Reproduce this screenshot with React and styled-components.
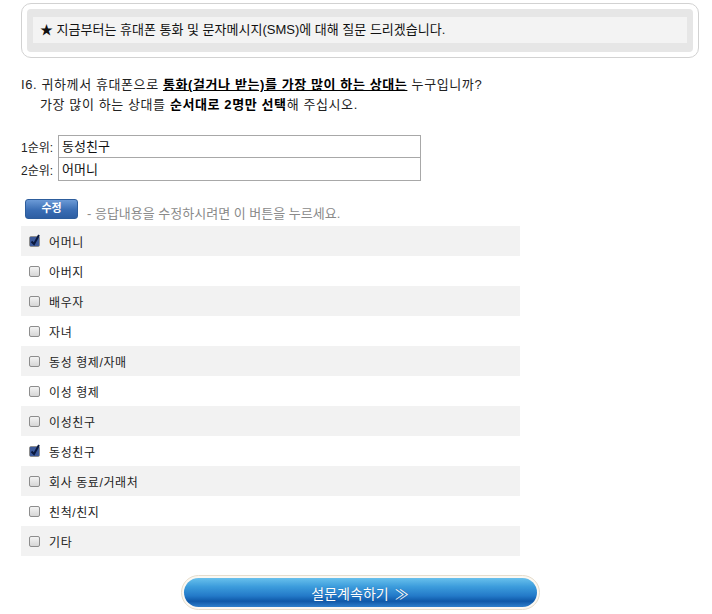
import React from 'react'
import styled, { createGlobalStyle } from 'styled-components'

const GlobalStyle = createGlobalStyle`
    body {
        margin: 0;
        background: #fff;
        font-family: "Liberation Sans", "Noto Sans CJK KR", sans-serif;
        font-size: 12px;
        color: #222;
    }
`

const Page = styled.div`
    width: 678px;
    padding: 3px 0 0 21px;
`

const NoticeBox = styled.div`
    border: 1px solid #d2d2d2;
    border-radius: 10px;
    padding: 5px 5px;
`

const NoticeInner = styled.div`
    background: #e6e6e6;
    border-radius: 4px;
    padding: 8px 6px 9px 6px;
`

const NoticeText = styled.div`
    background: #f3f3f3;
    height: 26px;
    line-height: 26px;
    padding-left: 7px;
    font-size: 13px;
    color: #111;
`

const Question = styled.div`
    margin-top: 17px;
    line-height: 20px;
    font-size: 13px;
    letter-spacing: 0.6px;
    color: #222;
`

const QuestionSub = styled.div`
    padding-left: 19px;
`

const Strong = styled.b`
    text-decoration: ${p => (p.underline ? 'underline' : 'none')};
    color: #000;
`

const Ranks = styled.div`
    margin-top: 20px;
    display: flex;
    flex-direction: column;
`

const RankRow = styled.div`
    display: flex;
    align-items: center;
`

const RankLabel = styled.span`
    width: 37px;
    font-size: 12px;
    color: #222;
`

const RankInput = styled.div`
    width: 358px;
    height: 21px;
    line-height: 21px;
    border: 1px solid #a8a8a8;
    border-top-width: ${p => (p.joined ? '0' : '1px')};
    padding-top: ${p => (p.joined ? '1px' : '0')};
    padding-left: 3px;
    font-size: 13px;
    color: #111;
`

const EditRow = styled.div`
    margin-top: 18px;
    padding-left: 4px;
    display: flex;
    align-items: flex-end;
    gap: 9px;
    height: 20px;
`

const EditButton = styled.button`
    width: 53px;
    height: 20px;
    border: 1px solid #2d5d9c;
    border-radius: 3px;
    background: linear-gradient(#6b9ad6, #3a6db4 55%, #2d5ea3);
    color: #fff;
    font-family: inherit;
    font-size: 11px;
    font-weight: bold;
    padding: 0 0 3px;
    line-height: 14px;
`

const EditHint = styled.span`
    color: #8a8a8a;
    font-size: 13px;
    line-height: 14px;
    position: relative;
    top: 2px;
`

const List = styled.div`
    margin-top: 7px;
    width: 499px;
`

const Option = styled.div`
    height: 30px;
    display: flex;
    align-items: center;
    padding-left: 8px;
    gap: 9px;
    background: ${p => (p.shaded ? '#f2f2f2' : '#fff')};
    font-size: 12px;
    letter-spacing: 0.6px;
    color: #222;
`

const Box = styled.span`
    width: 9px;
    height: 9px;
    border: 1px solid #8d8d8d;
    border-radius: 2px;
    background: linear-gradient(#f4f4f4, #d6d6d6);
    position: relative;
    flex: none;
`

const Tick = styled.svg`
    position: absolute;
    left: -1px;
    top: -3px;
`

const Footer = styled.div`
    margin-top: 19px;
    display: flex;
    justify-content: center;
`

const NextButton = styled.button`
    width: 359px;
    height: 35px;
    border-radius: 18px;
    border: 1px solid #e6ddcc;
    padding: 2px;
    background: #fbf8f2;
    font-family: inherit;
    cursor: pointer;
`

const NextInner = styled.div`
    height: 100%;
    border-radius: 16px;
    background: linear-gradient(
        #68c0ec 0%,
        #3c9cdc 30%,
        #2379c8 62%,
        #0f58a8 80%,
        #2f7fcc 100%
    );
    color: #fff;
    font-size: 14px;
    display: flex;
    align-items: center;
    justify-content: center;
    gap: 6px;
    text-shadow: 0 0 1px rgba(0, 40, 90, 0.4);
`

const options = [
    { label: '어머니', checked: true },
    { label: '아버지' },
    { label: '배우자' },
    { label: '자녀' },
    { label: '동성 형제/자매' },
    { label: '이성 형제' },
    { label: '이성친구' },
    { label: '동성친구', checked: true },
    { label: '회사 동료/거래처' },
    { label: '친척/친지' },
    { label: '기타' },
]

const Checkbox = ({ checked }) => (
    <Box>
        {checked && (
            <Tick width="12" height="13" viewBox="0 0 12 13">
                <rect x="1" y="3" width="9" height="9" fill="#3d5a9a" />
                <path d="M2.5 7.5 L5 10 L10 1" stroke="#0b1a40" strokeWidth="2" fill="none" />
            </Tick>
        )}
    </Box>
)

const App = () => {
    return (
        <Page>
            <GlobalStyle />
            <NoticeBox>
                <NoticeInner>
                    <NoticeText>★ 지금부터는 휴대폰 통화 및 문자메시지(SMS)에 대해 질문 드리겠습니다.</NoticeText>
                </NoticeInner>
            </NoticeBox>

            <Question>
                <div>
                    I6. 귀하께서 휴대폰으로 <Strong underline>통화(걸거나 받는)를 가장 많이 하는 상대는</Strong> 누구입니까?
                </div>
                <QuestionSub>
                    가장 많이 하는 상대를 <Strong>순서대로 2명만 선택</Strong>해 주십시오.
                </QuestionSub>
            </Question>

            <Ranks>
                <RankRow>
                    <RankLabel>1순위:</RankLabel>
                    <RankInput>동성친구</RankInput>
                </RankRow>
                <RankRow>
                    <RankLabel>2순위:</RankLabel>
                    <RankInput joined>어머니</RankInput>
                </RankRow>
            </Ranks>

            <EditRow>
                <EditButton>수정</EditButton>
                <EditHint>- 응답내용을 수정하시려면 이 버튼을 누르세요.</EditHint>
            </EditRow>

            <List>
                {options.map((o, i) => (
                    <Option key={o.label} shaded={i % 2 === 0}>
                        <Checkbox checked={o.checked} />
                        <span>{o.label}</span>
                    </Option>
                ))}
            </List>

            <Footer>
                <NextButton>
                    <NextInner>
                        설문계속하기 <span>≫</span>
                    </NextInner>
                </NextButton>
            </Footer>
        </Page>
    )
}

export default App
